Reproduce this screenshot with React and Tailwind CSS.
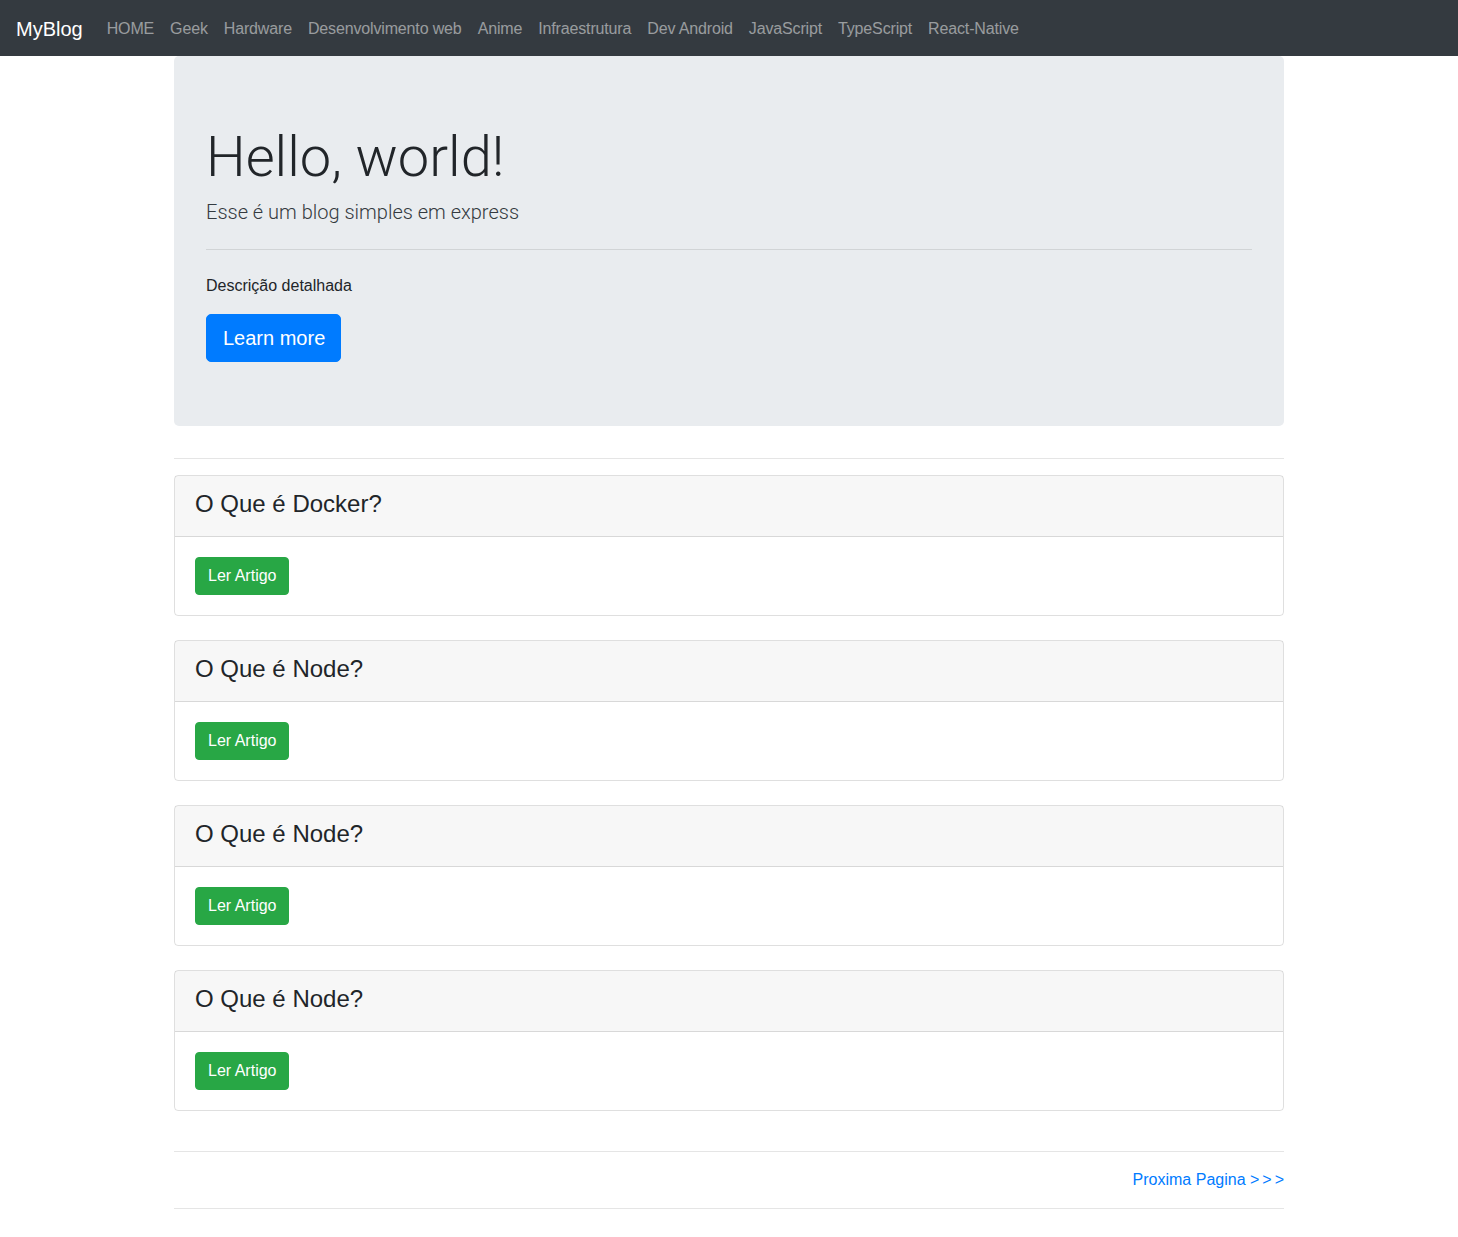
import React from 'react';

const links = [
  'HOME',
  'Geek',
  'Hardware',
  'Desenvolvimento web',
  'Anime',
  'Infraestrutura',
  'Dev Android',
  'JavaScript',
  'TypeScript',
  'React-Native',
];

const artigos = ['O Que é Docker?', 'O Que é Node?', 'O Que é Node?', 'O Que é Node?'];

export default function App() {
  return (
    <div className="min-h-screen bg-white text-[#212529] font-['Liberation_Sans',Arial,sans-serif] text-base leading-6">
      <nav className="h-14 bg-[#343a40] px-4 flex items-center">
        <a href="#" className="text-white text-xl leading-[30px] pt-[6px] pb-[4px] mr-4">MyBlog</a>
        <ul className="flex items-center">
          {links.map((l) => (
            <li key={l}>
              <a href="#" className="block px-2 pt-[9px] pb-[7px] tracking-[-0.15px] text-white/50 hover:text-white/75">{l}</a>
            </li>
          ))}
        </ul>
      </nav>

      <main className="w-[1110px] mx-auto">
        <div className="bg-[#e9ecef] rounded-[5px] px-8 py-16 mb-8">
          <h1 className="font-['Roboto',sans-serif] font-light text-[56px] leading-[67px] pt-1 mb-1">Hello, world!</h1>
          <p className="font-['Roboto',sans-serif] font-light text-xl leading-[30px] pt-[2px] -mb-[2px] text-[#343a40]">Esse é um blog simples em express</p>
          <hr className="my-6 border-t border-black/10" />
          <p className="mb-4">Descrição detalhada</p>
          <a href="#" className="inline-block bg-[#007bff] border border-[#007bff] text-white text-xl leading-[30px] pl-4 pr-[15px] py-2 rounded-[5px]">Learn more</a>
        </div>

        <hr className="border-t border-black/10 mb-4" />

        {artigos.map((titulo, i) => (
          <div key={i} className="border border-black/[0.125] rounded mb-6">
            <div className="bg-black/[0.03] border-b border-black/[0.125] px-5 pt-[13px] pb-[10px]">
              <h4 className="text-2xl leading-[29px] font-normal mb-2">{titulo}</h4>
            </div>
            <div className="p-5">
              <a href="#" className="inline-block bg-[#28a745] border border-[#28a745] text-white px-3 py-[6px] rounded leading-6">Ler Artigo</a>
            </div>
          </div>
        ))}

        <hr className="border-t border-black/10 mt-[40px]" />
        <div className="flex justify-end py-4">
          <a href="#" className="text-[#007bff]">Proxima Pagina <span className="tracking-[3px]">&gt;&gt;</span>&gt;</a>
        </div>
        <hr className="border-t border-black/10" />
      </main>
    </div>
  );
}
